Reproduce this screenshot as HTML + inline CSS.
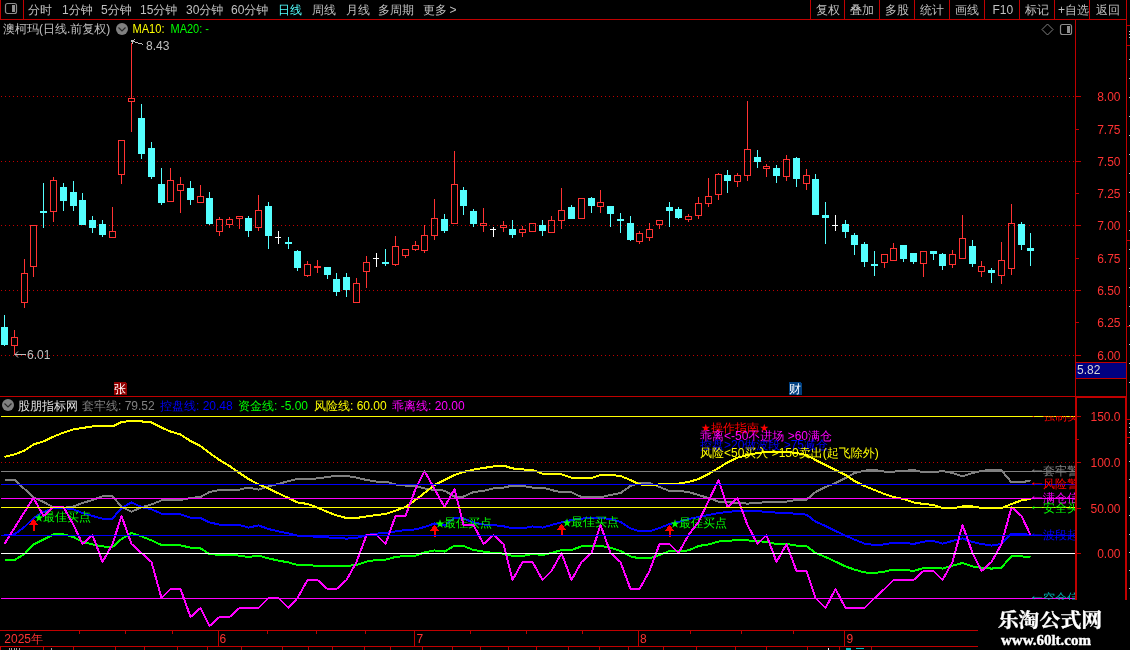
<!DOCTYPE html><html lang="zh"><head><meta charset="utf-8"><title>澳柯玛 日线</title>
<style>html,body{margin:0;padding:0;background:#000;overflow:hidden}svg{display:block;will-change:transform}text{font-family:"Liberation Sans","WenQuanYi Zen Hei","Noto Sans CJK SC",sans-serif;font-size:12px}.s{font-family:"Liberation Serif","Noto Serif CJK SC",serif;font-weight:bold}</style></head><body>
<svg width="1130" height="650" viewBox="0 0 1130 650">
<rect width="1130" height="650" fill="#000"/>
<g shape-rendering="crispEdges">
<defs><pattern id="dot" x="1" y="0" width="4" height="1" patternUnits="userSpaceOnUse"><rect x="0" y="0" width="1" height="1" fill="#c00000"/></pattern></defs>
<rect x="1" y="96" width="1074" height="1" fill="url(#dot)"/>
<rect x="1075" y="96" width="6" height="1" fill="#c00000"/>
<rect x="1" y="161" width="1074" height="1" fill="url(#dot)"/>
<rect x="1075" y="161" width="6" height="1" fill="#c00000"/>
<rect x="1" y="225" width="1074" height="1" fill="url(#dot)"/>
<rect x="1075" y="225" width="6" height="1" fill="#c00000"/>
<rect x="1" y="290" width="1074" height="1" fill="url(#dot)"/>
<rect x="1075" y="290" width="6" height="1" fill="#c00000"/>
<rect x="1" y="355" width="1074" height="1" fill="url(#dot)"/>
<rect x="1075" y="355" width="6" height="1" fill="#c00000"/>
<rect x="1075" y="129" width="4" height="1" fill="#c00000"/>
<rect x="1075" y="193" width="4" height="1" fill="#c00000"/>
<rect x="1075" y="258" width="4" height="1" fill="#c00000"/>
<rect x="1075" y="322" width="4" height="1" fill="#c00000"/>
<rect x="1" y="462" width="1074" height="1" fill="url(#dot)"/>
<rect x="1075" y="462" width="6" height="1" fill="#c00000"/>
<rect x="1075" y="416" width="6" height="1" fill="#c00000"/>
<rect x="1075" y="508" width="6" height="1" fill="#c00000"/>
<rect x="1075" y="553" width="6" height="1" fill="#c00000"/>
<rect x="1075" y="439" width="4" height="1" fill="#c00000"/>
<rect x="4" y="315" width="1" height="31" fill="#54ffff"/>
<rect x="1" y="327" width="7" height="18" fill="#54ffff"/>
<rect x="14" y="330" width="1" height="7" fill="#ff3232"/>
<rect x="14" y="346" width="1" height="9" fill="#ff3232"/>
<path d="M11 337h7v9h-7z M12 338h5v7h-5z" fill="#ff3232" fill-rule="evenodd"/>
<rect x="24" y="259" width="1" height="14" fill="#ff3232"/>
<rect x="24" y="303" width="1" height="5" fill="#ff3232"/>
<path d="M21 273h7v30h-7z M22 274h5v28h-5z" fill="#ff3232" fill-rule="evenodd"/>
<rect x="33" y="267" width="1" height="10" fill="#ff3232"/>
<path d="M30 225h7v42h-7z M31 226h5v40h-5z" fill="#ff3232" fill-rule="evenodd"/>
<rect x="43" y="183" width="1" height="45" fill="#54ffff"/>
<rect x="40" y="211" width="7" height="2" fill="#54ffff"/>
<rect x="53" y="177" width="1" height="3" fill="#ff3232"/>
<rect x="53" y="212" width="1" height="10" fill="#ff3232"/>
<path d="M50 180h7v32h-7z M51 181h5v30h-5z" fill="#ff3232" fill-rule="evenodd"/>
<rect x="63" y="183" width="1" height="28" fill="#54ffff"/>
<rect x="60" y="187" width="7" height="14" fill="#54ffff"/>
<rect x="73" y="181" width="1" height="30" fill="#54ffff"/>
<rect x="70" y="192" width="7" height="14" fill="#54ffff"/>
<rect x="82" y="193" width="1" height="32" fill="#54ffff"/>
<rect x="79" y="200" width="7" height="25" fill="#54ffff"/>
<rect x="92" y="216" width="1" height="17" fill="#54ffff"/>
<rect x="89" y="220" width="7" height="8" fill="#54ffff"/>
<rect x="102" y="220" width="1" height="17" fill="#54ffff"/>
<rect x="99" y="224" width="7" height="11" fill="#54ffff"/>
<rect x="112" y="207" width="1" height="24" fill="#ff3232"/>
<path d="M109 231h7v7h-7z M110 232h5v5h-5z" fill="#ff3232" fill-rule="evenodd"/>
<rect x="121" y="175" width="1" height="9" fill="#ff3232"/>
<path d="M118 140h7v35h-7z M119 141h5v33h-5z" fill="#ff3232" fill-rule="evenodd"/>
<rect x="131" y="43" width="1" height="55" fill="#ff3232"/>
<rect x="131" y="102" width="1" height="30" fill="#ff3232"/>
<path d="M128 98h7v4h-7z M129 99h5v2h-5z" fill="#ff3232" fill-rule="evenodd"/>
<rect x="141" y="104" width="1" height="55" fill="#54ffff"/>
<rect x="138" y="118" width="7" height="36" fill="#54ffff"/>
<rect x="151" y="142" width="1" height="37" fill="#54ffff"/>
<rect x="148" y="148" width="7" height="29" fill="#54ffff"/>
<rect x="161" y="168" width="1" height="37" fill="#54ffff"/>
<rect x="158" y="184" width="7" height="19" fill="#54ffff"/>
<rect x="170" y="168" width="1" height="12" fill="#ff3232"/>
<path d="M167 180h7v22h-7z M168 181h5v20h-5z" fill="#ff3232" fill-rule="evenodd"/>
<rect x="180" y="177" width="1" height="7" fill="#ff3232"/>
<rect x="180" y="191" width="1" height="22" fill="#ff3232"/>
<path d="M177 184h7v7h-7z M178 185h5v5h-5z" fill="#ff3232" fill-rule="evenodd"/>
<rect x="190" y="181" width="1" height="24" fill="#54ffff"/>
<rect x="187" y="188" width="7" height="12" fill="#54ffff"/>
<rect x="200" y="185" width="1" height="11" fill="#ff3232"/>
<path d="M197 196h7v7h-7z M198 197h5v5h-5z" fill="#ff3232" fill-rule="evenodd"/>
<rect x="209" y="192" width="1" height="33" fill="#54ffff"/>
<rect x="206" y="198" width="7" height="26" fill="#54ffff"/>
<rect x="219" y="217" width="1" height="2" fill="#ff3232"/>
<rect x="219" y="232" width="1" height="4" fill="#ff3232"/>
<path d="M216 219h7v13h-7z M217 220h5v11h-5z" fill="#ff3232" fill-rule="evenodd"/>
<rect x="229" y="217" width="1" height="2" fill="#ff3232"/>
<rect x="229" y="225" width="1" height="3" fill="#ff3232"/>
<path d="M226 219h7v6h-7z M227 220h5v4h-5z" fill="#ff3232" fill-rule="evenodd"/>
<rect x="239" y="219" width="1" height="10" fill="#ff3232"/>
<path d="M236 216h7v3h-7z M237 217h5v1h-5z" fill="#ff3232" fill-rule="evenodd"/>
<rect x="248" y="216" width="1" height="21" fill="#54ffff"/>
<rect x="245" y="218" width="7" height="13" fill="#54ffff"/>
<rect x="258" y="195" width="1" height="15" fill="#ff3232"/>
<rect x="258" y="228" width="1" height="3" fill="#ff3232"/>
<path d="M255 210h7v18h-7z M256 211h5v16h-5z" fill="#ff3232" fill-rule="evenodd"/>
<rect x="268" y="202" width="1" height="47" fill="#54ffff"/>
<rect x="265" y="206" width="7" height="30" fill="#54ffff"/>
<rect x="278" y="231" width="1" height="13" fill="#ffffff"/>
<rect x="275" y="237" width="6" height="1" fill="#ffffff"/>
<rect x="288" y="237" width="1" height="12" fill="#54ffff"/>
<rect x="285" y="242" width="7" height="2" fill="#54ffff"/>
<rect x="297" y="250" width="1" height="21" fill="#54ffff"/>
<rect x="294" y="251" width="7" height="17" fill="#54ffff"/>
<rect x="307" y="261" width="1" height="3" fill="#ff3232"/>
<rect x="307" y="276" width="1" height="1" fill="#ff3232"/>
<path d="M304 264h7v12h-7z M305 265h5v10h-5z" fill="#ff3232" fill-rule="evenodd"/>
<rect x="317" y="260" width="1" height="13" fill="#ff3232"/>
<rect x="314" y="266" width="7" height="2" fill="#ff3232"/>
<rect x="327" y="267" width="1" height="12" fill="#54ffff"/>
<rect x="324" y="267" width="7" height="8" fill="#54ffff"/>
<rect x="336" y="273" width="1" height="23" fill="#54ffff"/>
<rect x="333" y="279" width="7" height="13" fill="#54ffff"/>
<rect x="346" y="273" width="1" height="24" fill="#54ffff"/>
<rect x="343" y="277" width="7" height="13" fill="#54ffff"/>
<rect x="356" y="278" width="1" height="5" fill="#ff3232"/>
<path d="M353 283h7v20h-7z M354 284h5v18h-5z" fill="#ff3232" fill-rule="evenodd"/>
<rect x="366" y="256" width="1" height="6" fill="#ff3232"/>
<rect x="366" y="272" width="1" height="16" fill="#ff3232"/>
<path d="M363 262h7v10h-7z M364 263h5v8h-5z" fill="#ff3232" fill-rule="evenodd"/>
<rect x="376" y="253" width="1" height="14" fill="#ffffff"/>
<rect x="373" y="258" width="6" height="1" fill="#ffffff"/>
<rect x="385" y="249" width="1" height="17" fill="#54ffff"/>
<rect x="382" y="262" width="7" height="2" fill="#54ffff"/>
<rect x="395" y="236" width="1" height="10" fill="#ff3232"/>
<rect x="395" y="265" width="1" height="1" fill="#ff3232"/>
<path d="M392 246h7v19h-7z M393 247h5v17h-5z" fill="#ff3232" fill-rule="evenodd"/>
<rect x="405" y="256" width="1" height="2" fill="#ff3232"/>
<path d="M402 249h7v7h-7z M403 250h5v5h-5z" fill="#ff3232" fill-rule="evenodd"/>
<rect x="415" y="241" width="1" height="4" fill="#ff3232"/>
<rect x="415" y="250" width="1" height="1" fill="#ff3232"/>
<path d="M412 245h7v5h-7z M413 246h5v3h-5z" fill="#ff3232" fill-rule="evenodd"/>
<rect x="424" y="225" width="1" height="10" fill="#ff3232"/>
<rect x="424" y="251" width="1" height="2" fill="#ff3232"/>
<path d="M421 235h7v16h-7z M422 236h5v14h-5z" fill="#ff3232" fill-rule="evenodd"/>
<rect x="434" y="199" width="1" height="19" fill="#ff3232"/>
<rect x="434" y="236" width="1" height="4" fill="#ff3232"/>
<path d="M431 218h7v18h-7z M432 219h5v16h-5z" fill="#ff3232" fill-rule="evenodd"/>
<rect x="444" y="214" width="1" height="19" fill="#54ffff"/>
<rect x="441" y="219" width="7" height="12" fill="#54ffff"/>
<rect x="454" y="151" width="1" height="33" fill="#ff3232"/>
<path d="M451 184h7v40h-7z M452 185h5v38h-5z" fill="#ff3232" fill-rule="evenodd"/>
<rect x="463" y="187" width="1" height="28" fill="#54ffff"/>
<rect x="460" y="190" width="7" height="16" fill="#54ffff"/>
<rect x="473" y="209" width="1" height="18" fill="#54ffff"/>
<rect x="470" y="211" width="7" height="13" fill="#54ffff"/>
<rect x="483" y="208" width="1" height="15" fill="#ff3232"/>
<rect x="483" y="226" width="1" height="6" fill="#ff3232"/>
<path d="M480 223h7v3h-7z M481 224h5v1h-5z" fill="#ff3232" fill-rule="evenodd"/>
<rect x="493" y="227" width="1" height="10" fill="#ffffff"/>
<rect x="490" y="229" width="6" height="1" fill="#ffffff"/>
<rect x="503" y="221" width="1" height="4" fill="#ff3232"/>
<rect x="503" y="228" width="1" height="4" fill="#ff3232"/>
<path d="M500 225h7v3h-7z M501 226h5v1h-5z" fill="#ff3232" fill-rule="evenodd"/>
<rect x="512" y="220" width="1" height="18" fill="#54ffff"/>
<rect x="509" y="229" width="7" height="6" fill="#54ffff"/>
<rect x="522" y="226" width="1" height="3" fill="#ff3232"/>
<rect x="522" y="233" width="1" height="4" fill="#ff3232"/>
<path d="M519 229h7v4h-7z M520 230h5v2h-5z" fill="#ff3232" fill-rule="evenodd"/>
<path d="M529 223h7v9h-7z M530 224h5v7h-5z" fill="#ff3232" fill-rule="evenodd"/>
<rect x="542" y="220" width="1" height="16" fill="#54ffff"/>
<rect x="539" y="225" width="7" height="6" fill="#54ffff"/>
<rect x="551" y="216" width="1" height="4" fill="#ff3232"/>
<path d="M548 220h7v13h-7z M549 221h5v11h-5z" fill="#ff3232" fill-rule="evenodd"/>
<rect x="561" y="188" width="1" height="22" fill="#ff3232"/>
<rect x="561" y="221" width="1" height="8" fill="#ff3232"/>
<path d="M558 210h7v11h-7z M559 211h5v9h-5z" fill="#ff3232" fill-rule="evenodd"/>
<rect x="571" y="205" width="1" height="14" fill="#54ffff"/>
<rect x="568" y="207" width="7" height="12" fill="#54ffff"/>
<path d="M578 198h7v21h-7z M579 199h5v19h-5z" fill="#ff3232" fill-rule="evenodd"/>
<rect x="591" y="197" width="1" height="16" fill="#54ffff"/>
<rect x="588" y="198" width="7" height="8" fill="#54ffff"/>
<rect x="600" y="190" width="1" height="12" fill="#ff3232"/>
<rect x="600" y="207" width="1" height="6" fill="#ff3232"/>
<path d="M597 202h7v5h-7z M598 203h5v3h-5z" fill="#ff3232" fill-rule="evenodd"/>
<rect x="610" y="206" width="1" height="21" fill="#54ffff"/>
<rect x="607" y="206" width="7" height="8" fill="#54ffff"/>
<rect x="620" y="213" width="1" height="20" fill="#54ffff"/>
<rect x="617" y="219" width="7" height="2" fill="#54ffff"/>
<rect x="630" y="216" width="1" height="25" fill="#54ffff"/>
<rect x="627" y="223" width="7" height="17" fill="#54ffff"/>
<rect x="639" y="231" width="1" height="2" fill="#ff3232"/>
<rect x="639" y="242" width="1" height="2" fill="#ff3232"/>
<path d="M636 233h7v9h-7z M637 234h5v7h-5z" fill="#ff3232" fill-rule="evenodd"/>
<rect x="649" y="223" width="1" height="6" fill="#ff3232"/>
<rect x="649" y="238" width="1" height="3" fill="#ff3232"/>
<path d="M646 229h7v9h-7z M647 230h5v7h-5z" fill="#ff3232" fill-rule="evenodd"/>
<rect x="659" y="225" width="1" height="4" fill="#ff3232"/>
<path d="M656 220h7v5h-7z M657 221h5v3h-5z" fill="#ff3232" fill-rule="evenodd"/>
<rect x="669" y="202" width="1" height="25" fill="#54ffff"/>
<rect x="666" y="207" width="7" height="4" fill="#54ffff"/>
<rect x="678" y="207" width="1" height="12" fill="#54ffff"/>
<rect x="675" y="209" width="7" height="9" fill="#54ffff"/>
<rect x="688" y="214" width="1" height="2" fill="#ff3232"/>
<rect x="688" y="220" width="1" height="2" fill="#ff3232"/>
<path d="M685 216h7v4h-7z M686 217h5v2h-5z" fill="#ff3232" fill-rule="evenodd"/>
<rect x="698" y="197" width="1" height="6" fill="#ff3232"/>
<rect x="698" y="216" width="1" height="3" fill="#ff3232"/>
<path d="M695 203h7v13h-7z M696 204h5v11h-5z" fill="#ff3232" fill-rule="evenodd"/>
<rect x="708" y="178" width="1" height="18" fill="#ff3232"/>
<rect x="708" y="204" width="1" height="3" fill="#ff3232"/>
<path d="M705 196h7v8h-7z M706 197h5v6h-5z" fill="#ff3232" fill-rule="evenodd"/>
<rect x="718" y="173" width="1" height="1" fill="#ff3232"/>
<rect x="718" y="195" width="1" height="5" fill="#ff3232"/>
<path d="M715 174h7v21h-7z M716 175h5v19h-5z" fill="#ff3232" fill-rule="evenodd"/>
<rect x="727" y="170" width="1" height="23" fill="#54ffff"/>
<rect x="724" y="175" width="7" height="6" fill="#54ffff"/>
<rect x="737" y="173" width="1" height="2" fill="#ff3232"/>
<rect x="737" y="182" width="1" height="5" fill="#ff3232"/>
<path d="M734 175h7v7h-7z M735 176h5v5h-5z" fill="#ff3232" fill-rule="evenodd"/>
<rect x="747" y="101" width="1" height="48" fill="#ff3232"/>
<rect x="747" y="176" width="1" height="5" fill="#ff3232"/>
<path d="M744 149h7v27h-7z M745 150h5v25h-5z" fill="#ff3232" fill-rule="evenodd"/>
<rect x="757" y="150" width="1" height="18" fill="#54ffff"/>
<rect x="754" y="157" width="7" height="5" fill="#54ffff"/>
<rect x="766" y="164" width="1" height="2" fill="#ff3232"/>
<rect x="766" y="169" width="1" height="8" fill="#ff3232"/>
<path d="M763 166h7v3h-7z M764 167h5v1h-5z" fill="#ff3232" fill-rule="evenodd"/>
<rect x="776" y="165" width="1" height="18" fill="#54ffff"/>
<rect x="773" y="168" width="7" height="8" fill="#54ffff"/>
<rect x="786" y="155" width="1" height="4" fill="#ff3232"/>
<rect x="786" y="177" width="1" height="4" fill="#ff3232"/>
<path d="M783 159h7v18h-7z M784 160h5v16h-5z" fill="#ff3232" fill-rule="evenodd"/>
<rect x="796" y="157" width="1" height="30" fill="#54ffff"/>
<rect x="793" y="158" width="7" height="21" fill="#54ffff"/>
<rect x="806" y="169" width="1" height="6" fill="#ff3232"/>
<rect x="806" y="184" width="1" height="6" fill="#ff3232"/>
<path d="M803 175h7v9h-7z M804 176h5v7h-5z" fill="#ff3232" fill-rule="evenodd"/>
<rect x="815" y="174" width="1" height="41" fill="#54ffff"/>
<rect x="812" y="179" width="7" height="36" fill="#54ffff"/>
<rect x="825" y="202" width="1" height="42" fill="#54ffff"/>
<rect x="822" y="215" width="7" height="3" fill="#54ffff"/>
<rect x="835" y="215" width="1" height="16" fill="#ffffff"/>
<rect x="832" y="225" width="6" height="1" fill="#ffffff"/>
<rect x="845" y="220" width="1" height="18" fill="#54ffff"/>
<rect x="842" y="224" width="7" height="8" fill="#54ffff"/>
<rect x="854" y="233" width="1" height="22" fill="#54ffff"/>
<rect x="851" y="235" width="7" height="10" fill="#54ffff"/>
<rect x="864" y="242" width="1" height="25" fill="#54ffff"/>
<rect x="861" y="244" width="7" height="18" fill="#54ffff"/>
<rect x="874" y="251" width="1" height="25" fill="#54ffff"/>
<rect x="871" y="264" width="7" height="2" fill="#54ffff"/>
<rect x="884" y="263" width="1" height="5" fill="#ff3232"/>
<path d="M881 254h7v9h-7z M882 255h5v7h-5z" fill="#ff3232" fill-rule="evenodd"/>
<rect x="893" y="243" width="1" height="5" fill="#ff3232"/>
<path d="M890 248h7v13h-7z M891 249h5v11h-5z" fill="#ff3232" fill-rule="evenodd"/>
<rect x="903" y="245" width="1" height="17" fill="#54ffff"/>
<rect x="900" y="245" width="7" height="14" fill="#54ffff"/>
<rect x="913" y="253" width="1" height="11" fill="#54ffff"/>
<rect x="910" y="253" width="7" height="9" fill="#54ffff"/>
<rect x="923" y="264" width="1" height="13" fill="#ff3232"/>
<path d="M920 251h7v13h-7z M921 252h5v11h-5z" fill="#ff3232" fill-rule="evenodd"/>
<rect x="933" y="251" width="1" height="9" fill="#54ffff"/>
<rect x="930" y="251" width="7" height="3" fill="#54ffff"/>
<rect x="942" y="253" width="1" height="17" fill="#54ffff"/>
<rect x="939" y="254" width="7" height="12" fill="#54ffff"/>
<rect x="952" y="250" width="1" height="4" fill="#ff3232"/>
<rect x="952" y="265" width="1" height="3" fill="#ff3232"/>
<path d="M949 254h7v11h-7z M950 255h5v9h-5z" fill="#ff3232" fill-rule="evenodd"/>
<rect x="962" y="215" width="1" height="23" fill="#ff3232"/>
<path d="M959 238h7v21h-7z M960 239h5v19h-5z" fill="#ff3232" fill-rule="evenodd"/>
<rect x="972" y="240" width="1" height="27" fill="#54ffff"/>
<rect x="969" y="246" width="7" height="18" fill="#54ffff"/>
<rect x="981" y="261" width="1" height="5" fill="#ff3232"/>
<rect x="981" y="272" width="1" height="5" fill="#ff3232"/>
<path d="M978 266h7v6h-7z M979 267h5v4h-5z" fill="#ff3232" fill-rule="evenodd"/>
<rect x="991" y="268" width="1" height="15" fill="#54ffff"/>
<rect x="988" y="270" width="7" height="3" fill="#54ffff"/>
<rect x="1001" y="242" width="1" height="18" fill="#ff3232"/>
<rect x="1001" y="276" width="1" height="8" fill="#ff3232"/>
<path d="M998 260h7v16h-7z M999 261h5v14h-5z" fill="#ff3232" fill-rule="evenodd"/>
<rect x="1011" y="204" width="1" height="19" fill="#ff3232"/>
<rect x="1011" y="269" width="1" height="6" fill="#ff3232"/>
<path d="M1008 223h7v46h-7z M1009 224h5v44h-5z" fill="#ff3232" fill-rule="evenodd"/>
<rect x="1021" y="222" width="1" height="28" fill="#54ffff"/>
<rect x="1018" y="224" width="7" height="21" fill="#54ffff"/>
<rect x="1030" y="233" width="1" height="33" fill="#54ffff"/>
<rect x="1027" y="248" width="7" height="3" fill="#54ffff"/>
</g>
<defs><clipPath id="cp"><rect x="0" y="416" width="1075" height="214"/></clipPath></defs>
<g clip-path="url(#cp)">
<polyline points="4.5,479.8 14.5,479.8 24.5,489 33.5,497.4 43.5,502 53.5,507.4 63.5,508 73.5,506.4 82.5,503 92.5,500 102.5,496.4 112.5,496 121.5,507 131.5,511.6 141.5,507.4 151.5,504.4 161.5,500.4 170.5,500 180.5,500 190.5,498 200.5,497 209.5,492 219.5,490 229.5,489.6 239.5,489.6 248.5,487.6 258.5,489.6 268.5,486.4 278.5,484 288.5,481 297.5,479 307.5,479 317.5,478.4 327.5,477 336.5,475.6 346.5,476 356.5,477.6 366.5,480 376.5,481.6 385.5,481.6 395.5,484.4 405.5,485.6 415.5,486 424.5,488.4 434.5,490 444.5,490.6 454.5,496.6 463.5,496.6 473.5,492 483.5,491 493.5,488.4 503.5,487.6 512.5,485.6 522.5,486 532.5,487.6 542.5,487.6 551.5,490 561.5,492.4 571.5,492.4 581.5,497 591.5,497.4 600.5,497.4 610.5,495 620.5,493 630.5,486 639.5,483 649.5,483 659.5,487 669.5,491 678.5,491 688.5,492 698.5,495 708.5,498 718.5,501.6 727.5,502 737.5,503 747.5,503.6 757.5,503 766.5,502 776.5,501.6 786.5,501.6 796.5,500 806.5,499.6 815.5,492 825.5,487 835.5,483 845.5,478 854.5,473 864.5,470.6 874.5,470 884.5,471.6 893.5,471.6 903.5,471 913.5,470 923.5,472.4 933.5,472.4 942.5,471 952.5,473 962.5,476.4 972.5,473 981.5,471 991.5,469.6 1001.5,470.4 1011.5,482.4 1021.5,482.4 1030.5,480.4" fill="none" stroke="#808080" stroke-width="2" stroke-linejoin="round" shape-rendering="crispEdges"/>
<polyline points="4.5,535 14.5,534.4 24.5,527 33.5,518 43.5,512 53.5,508 63.5,508 73.5,509.4 82.5,513 92.5,516 102.5,518.6 112.5,518.6 121.5,508 131.5,502.4 141.5,507 151.5,509.4 161.5,513.6 170.5,514 180.5,514.4 190.5,517.6 200.5,518 209.5,522.4 219.5,524.6 229.5,525 239.5,525 248.5,527.6 258.5,525.4 268.5,529 278.5,531.4 288.5,533.4 297.5,535.6 307.5,536 317.5,537 327.5,537.4 336.5,538 346.5,538.6 356.5,538 366.5,535 376.5,533.6 385.5,533 395.5,531.4 405.5,530 415.5,529.4 424.5,527 434.5,523.5 444.5,525.6 454.5,517.7 463.5,518.5 473.5,522.5 483.5,524.5 493.5,525 503.5,526.3 512.5,528.4 522.5,528.4 532.5,526.4 542.5,527.6 551.5,525 561.5,522.4 571.5,520 581.5,518.6 591.5,518 600.5,518 610.5,519 620.5,522 630.5,528.4 639.5,531.4 649.5,531.4 659.5,528 669.5,524 678.5,522 688.5,519 698.5,517 708.5,515 718.5,513 727.5,512 737.5,511 747.5,510.6 757.5,511 766.5,512 776.5,512.6 786.5,512.6 796.5,514 806.5,514.6 815.5,521.6 825.5,526 835.5,531 845.5,535.6 854.5,539.6 864.5,543.6 874.5,545 884.5,544.4 893.5,542.6 903.5,542.6 913.5,544 923.5,541.6 933.5,541 942.5,543.6 952.5,541 962.5,538.4 972.5,542 981.5,544 991.5,545.6 1001.5,544 1011.5,533.6 1021.5,533.6 1030.5,535" fill="none" stroke="#0000ff" stroke-width="2" stroke-linejoin="round" shape-rendering="crispEdges"/>
<polyline points="4.5,560 14.5,560 24.5,554 33.5,544.4 43.5,539.6 53.5,534.4 63.5,534.4 73.5,537 82.5,542 92.5,544.4 102.5,546.4 112.5,547 121.5,539 131.5,533 141.5,536.4 151.5,540.4 161.5,545 170.5,545 180.5,545.4 190.5,547.6 200.5,548.4 209.5,554 219.5,555 229.5,555 239.5,555.6 248.5,557 258.5,555.6 268.5,558.4 278.5,560.6 288.5,562.4 297.5,565 307.5,565 317.5,566 327.5,566 336.5,566 346.5,566 356.5,565 366.5,561.6 376.5,560 385.5,559.6 395.5,557 405.5,556 415.5,555.6 424.5,552.4 434.5,550.4 444.5,551.6 454.5,545.6 463.5,546 473.5,550 483.5,551.6 493.5,553 503.5,553.6 512.5,556 522.5,556 532.5,554 542.5,555 551.5,553 561.5,550 571.5,550 581.5,546.4 591.5,546 600.5,546 610.5,547.6 620.5,551 630.5,556.4 639.5,558.4 649.5,558.4 659.5,555 669.5,551 678.5,551 688.5,550.4 698.5,546 708.5,544.4 718.5,541.6 727.5,540.6 737.5,540.4 747.5,540.4 757.5,541 766.5,542 776.5,544 786.5,544 796.5,545.6 806.5,546 815.5,553 825.5,557 835.5,561.6 845.5,566.4 854.5,569.6 864.5,572.4 874.5,573 884.5,571.6 893.5,569.6 903.5,569.6 913.5,571 923.5,568 933.5,567.6 942.5,568.6 952.5,565.6 962.5,563 972.5,566.4 981.5,567.6 991.5,568.6 1001.5,567.6 1011.5,556 1021.5,556.4 1030.5,557" fill="none" stroke="#00ff00" stroke-width="2" stroke-linejoin="round" shape-rendering="crispEdges"/>
<polyline points="4.5,457 14.5,454.4 24.5,450.6 33.5,444.4 43.5,441.4 53.5,436.6 63.5,432.6 73.5,429.4 82.5,428 92.5,426.4 102.5,426.4 112.5,426.4 121.5,422 131.5,421 141.5,421.4 151.5,422.4 161.5,427.6 170.5,431.6 180.5,434.4 190.5,441 200.5,446 209.5,453 219.5,460 229.5,466 239.5,473 248.5,479 258.5,484.4 268.5,488.4 278.5,493.4 288.5,498 297.5,502.4 307.5,504 317.5,507.6 327.5,512 336.5,515.4 346.5,518 356.5,518 366.5,516.4 376.5,515 385.5,514 395.5,510.6 405.5,507 415.5,500 424.5,493 434.5,485 444.5,480 454.5,475 463.5,472 473.5,469.6 483.5,468 493.5,466.4 503.5,465.6 512.5,468.4 522.5,469.4 532.5,470 542.5,473.6 551.5,474.4 561.5,474.4 571.5,477.6 581.5,478 591.5,478 600.5,475 610.5,475 620.5,476 630.5,480 639.5,484.4 649.5,485 659.5,484.4 669.5,483.6 678.5,483.6 688.5,482 698.5,479 708.5,474 718.5,468 727.5,462.4 737.5,457.6 747.5,455 757.5,453 766.5,452 776.5,451.6 786.5,452 796.5,453 806.5,455 815.5,460 825.5,465 835.5,470 845.5,475 854.5,481 864.5,486 874.5,490 884.5,494 893.5,497 903.5,499 913.5,502.4 923.5,504 933.5,505 942.5,508 952.5,508.4 962.5,506.4 972.5,506.4 981.5,508 991.5,508.4 1001.5,508 1011.5,504 1021.5,500.4 1030.5,499" fill="none" stroke="#ffff00" stroke-width="2" stroke-linejoin="round" shape-rendering="crispEdges"/>
<text x="34" y="520.5" fill="#00ff00" style="font-size:10px">★</text>
<text x="43" y="521" fill="#00ff00">最佳买点</text>
<path d="M33.5 519l5 6h-4v6h-2v-6h-4z" fill="#ff0000" shape-rendering="crispEdges"/>
<text x="435" y="526.5" fill="#00ff00" style="font-size:10px">★</text>
<text x="444" y="527" fill="#00ff00">最佳买点</text>
<path d="M434.5 525l5 6h-4v6h-2v-6h-4z" fill="#ff0000" shape-rendering="crispEdges"/>
<text x="562" y="525.5" fill="#00ff00" style="font-size:10px">★</text>
<text x="571" y="526" fill="#00ff00">最佳买点</text>
<path d="M561.5 524l5 6h-4v6h-2v-6h-4z" fill="#ff0000" shape-rendering="crispEdges"/>
<text x="670" y="526.5" fill="#00ff00" style="font-size:10px">★</text>
<text x="679" y="527" fill="#00ff00">最佳买点</text>
<path d="M669.5 525l5 6h-4v6h-2v-6h-4z" fill="#ff0000" shape-rendering="crispEdges"/>
<polyline points="4.5,544 14.5,528 24.5,512 33.5,498 43.5,516 53.5,507 63.5,507 73.5,525 82.5,544 92.5,535 102.5,562 112.5,544 121.5,516 131.5,544 141.5,553 151.5,562 161.5,598 170.5,589 180.5,589 190.5,617 200.5,608 209.5,626 219.5,617 229.5,617 239.5,608 248.5,608 258.5,608 268.5,598 278.5,598 288.5,608 297.5,598 307.5,580 317.5,580 327.5,589 336.5,589 346.5,580 356.5,562 366.5,535 376.5,535 385.5,544 395.5,516 405.5,516 415.5,489 424.5,471 434.5,489 444.5,507 454.5,489 463.5,525 473.5,525 483.5,544 493.5,535 503.5,544 512.5,580 522.5,562 532.5,562 542.5,580 551.5,571 561.5,553 571.5,580 581.5,562 591.5,553 600.5,525 610.5,553 620.5,562 630.5,589 639.5,589 649.5,571 659.5,544 669.5,544 678.5,553 688.5,535 698.5,522 708.5,501 718.5,480 727.5,507 737.5,498 747.5,525 757.5,544 766.5,535 776.5,562 786.5,544 796.5,571 806.5,571 815.5,598 825.5,608 835.5,589 845.5,608 854.5,608 864.5,608 874.5,598 884.5,589 893.5,580 903.5,580 913.5,580 923.5,571 933.5,571 942.5,580 952.5,562 962.5,525 972.5,553 981.5,571 991.5,562 1001.5,544 1011.5,507 1021.5,516 1030.5,535" fill="none" stroke="#ff00ff" stroke-width="2" stroke-linejoin="round" shape-rendering="crispEdges"/>
<g shape-rendering="crispEdges">
<rect x="1" y="416" width="1074" height="1" fill="#ffff00"/>
<rect x="1" y="471" width="1074" height="1" fill="#808080"/>
<rect x="1" y="484" width="1074" height="1" fill="#0000ff"/>
<rect x="1" y="498" width="1074" height="1" fill="#ff00ff"/>
<rect x="1" y="507" width="1074" height="1" fill="#ffff00"/>
<rect x="1" y="535" width="1074" height="1" fill="#0000ff"/>
<rect x="1" y="553" width="1074" height="1" fill="#ffffff"/>
<rect x="1" y="598" width="1074" height="1" fill="#ff00ff"/>
</g>
<text x="701" y="432" fill="#ff0000"><tspan style="font-size:9.5px" dy="-1">★</tspan><tspan x="711" dy="1">操作指南</tspan><tspan x="759.5" dy="-1" style="font-size:9.5px">★</tspan></text>
<text x="700" y="440" fill="#ff00ff">乖离&lt;-50不进场 &gt;60满仓</text>
<text x="700" y="449" fill="#0000ff">控盘&gt;20做波段 &gt;75减仓</text>
<text x="700" y="457" fill="#ffff00">风险&lt;50买入 &gt;150卖出(起飞除外)</text>
<text x="1031" y="420" fill="#ff0000"><tspan style="font-family:'WenQuanYi Zen Hei','Noto Sans CJK SC',sans-serif">←</tspan>强制卖</text>
<text x="1031" y="475" fill="#808080"><tspan style="font-family:'WenQuanYi Zen Hei','Noto Sans CJK SC',sans-serif">←</tspan>套牢警</text>
<text x="1031" y="488" fill="#ff0000"><tspan style="font-family:'WenQuanYi Zen Hei','Noto Sans CJK SC',sans-serif">←</tspan>风险警</text>
<text x="1031" y="502" fill="#ff00ff"><tspan style="font-family:'WenQuanYi Zen Hei','Noto Sans CJK SC',sans-serif">←</tspan>满仓信</text>
<text x="1031" y="512" fill="#00ff00"><tspan style="font-family:'WenQuanYi Zen Hei','Noto Sans CJK SC',sans-serif">←</tspan>安全买</text>
<text x="1031" y="539" fill="#0000ff"><tspan style="font-family:'WenQuanYi Zen Hei','Noto Sans CJK SC',sans-serif">←</tspan>波段起</text>
<text x="1031" y="602" fill="#00b0b0"><tspan style="font-family:'WenQuanYi Zen Hei','Noto Sans CJK SC',sans-serif">←</tspan>空仓信</text>
</g>
<g shape-rendering="crispEdges">
<rect x="0" y="19" width="1127" height="1" fill="#c00000"/>
<rect x="0" y="0" width="1" height="20" fill="#c00000"/>
<rect x="23" y="0" width="1" height="20" fill="#c00000"/>
<rect x="810" y="0" width="1" height="20" fill="#c00000"/>
<rect x="844" y="0" width="1" height="20" fill="#c00000"/>
<rect x="879" y="0" width="1" height="20" fill="#c00000"/>
<rect x="914" y="0" width="1" height="20" fill="#c00000"/>
<rect x="949" y="0" width="1" height="20" fill="#c00000"/>
<rect x="984" y="0" width="1" height="20" fill="#c00000"/>
<rect x="1019" y="0" width="1" height="20" fill="#c00000"/>
<rect x="1054" y="0" width="1" height="20" fill="#c00000"/>
<rect x="1089" y="0" width="1" height="20" fill="#c00000"/>
<rect x="1075" y="19" width="1" height="378" fill="#c00000"/>
<rect x="1075" y="397" width="2" height="233" fill="#c00000"/>
<rect x="0" y="396" width="1127" height="1" fill="#c00000"/>
<rect x="1076" y="396" width="51" height="2" fill="#c00000"/>
<rect x="0" y="630" width="1076" height="1" fill="#c00000"/>
<rect x="0" y="646" width="1076" height="1" fill="#c00000"/>
<rect x="1126" y="0" width="1" height="650" fill="#c00000"/>
<rect x="1125" y="396" width="1" height="254" fill="#c00000"/>
<rect x="1127" y="25" width="3" height="1" fill="#c00000"/>
<rect x="1127" y="45" width="3" height="1" fill="#c00000"/>
<rect x="1127" y="240" width="3" height="1" fill="#c00000"/>
<rect x="1127" y="326" width="3" height="1" fill="#c00000"/>
<rect x="1127" y="419" width="3" height="1" fill="#c00000"/>
<rect x="1127" y="437" width="3" height="1" fill="#c00000"/>
<rect x="1129" y="59" width="1" height="1" fill="#c0c0c0"/>
<rect x="1129" y="78" width="1" height="1" fill="#c0c0c0"/>
<rect x="1129" y="97" width="1" height="1" fill="#c0c0c0"/>
<rect x="1129" y="116" width="1" height="1" fill="#c0c0c0"/>
<rect x="1129" y="135" width="1" height="1" fill="#c0c0c0"/>
<rect x="1129" y="154" width="1" height="1" fill="#c0c0c0"/>
<rect x="1129" y="173" width="1" height="1" fill="#c0c0c0"/>
<rect x="1129" y="192" width="1" height="1" fill="#c0c0c0"/>
<rect x="1129" y="211" width="1" height="1" fill="#c0c0c0"/>
<rect x="1129" y="230" width="1" height="1" fill="#c0c0c0"/>
<rect x="1129" y="249" width="1" height="1" fill="#c0c0c0"/>
<rect x="1129" y="268" width="1" height="1" fill="#c0c0c0"/>
<rect x="1129" y="287" width="1" height="1" fill="#c0c0c0"/>
<rect x="1129" y="306" width="1" height="1" fill="#c0c0c0"/>
<rect x="1129" y="325" width="1" height="1" fill="#c0c0c0"/>
<rect x="1129" y="344" width="1" height="1" fill="#c0c0c0"/>
<rect x="1129" y="363" width="1" height="1" fill="#c0c0c0"/>
<rect x="1129" y="382" width="1" height="1" fill="#c0c0c0"/>
<rect x="1129" y="443" width="1" height="1" fill="#c0c0c0"/>
<rect x="1129" y="461" width="1" height="1" fill="#c0c0c0"/>
<rect x="1129" y="479" width="1" height="1" fill="#c0c0c0"/>
<rect x="1129" y="497" width="1" height="1" fill="#c0c0c0"/>
<rect x="1129" y="515" width="1" height="1" fill="#c0c0c0"/>
<rect x="1129" y="534" width="1" height="1" fill="#c0c0c0"/>
<rect x="1129" y="552" width="1" height="1" fill="#c0c0c0"/>
<rect x="1129" y="570" width="1" height="1" fill="#c0c0c0"/>
<rect x="1129" y="588" width="1" height="1" fill="#c0c0c0"/>
<rect x="1129" y="31" width="1" height="1" fill="#c0c0c0"/>
<rect x="1129" y="34" width="1" height="1" fill="#c0c0c0"/>
<rect x="1129" y="37" width="1" height="1" fill="#c0c0c0"/>
<rect x="1129" y="423" width="1" height="1" fill="#c0c0c0"/>
<rect x="1129" y="427" width="1" height="1" fill="#c0c0c0"/>
<rect x="1129" y="432" width="1" height="1" fill="#c0c0c0"/>
<rect x="79" y="631" width="1" height="3" fill="#c00000"/>
<rect x="125" y="631" width="1" height="3" fill="#c00000"/>
<rect x="172" y="631" width="1" height="3" fill="#c00000"/>
<rect x="267" y="631" width="1" height="3" fill="#c00000"/>
<rect x="316" y="631" width="1" height="3" fill="#c00000"/>
<rect x="365" y="631" width="1" height="3" fill="#c00000"/>
<rect x="470" y="631" width="1" height="3" fill="#c00000"/>
<rect x="526" y="631" width="1" height="3" fill="#c00000"/>
<rect x="582" y="631" width="1" height="3" fill="#c00000"/>
<rect x="690" y="631" width="1" height="3" fill="#c00000"/>
<rect x="741" y="631" width="1" height="3" fill="#c00000"/>
<rect x="793" y="631" width="1" height="3" fill="#c00000"/>
<rect x="218" y="631" width="1" height="15" fill="#c00000"/>
<rect x="414" y="631" width="1" height="15" fill="#c00000"/>
<rect x="638" y="631" width="1" height="15" fill="#c00000"/>
<rect x="844" y="631" width="1" height="15" fill="#c00000"/>
<rect x="0" y="647" width="1" height="3" fill="#c00000"/>
<rect x="43" y="647" width="1" height="3" fill="#c00000"/>
<rect x="73" y="647" width="1" height="3" fill="#c00000"/>
<rect x="115" y="647" width="1" height="3" fill="#c00000"/>
<rect x="144" y="647" width="1" height="3" fill="#c00000"/>
<rect x="177" y="647" width="1" height="3" fill="#c00000"/>
<rect x="207" y="647" width="1" height="3" fill="#c00000"/>
<rect x="241" y="647" width="1" height="3" fill="#c00000"/>
<rect x="282" y="647" width="1" height="3" fill="#c00000"/>
<rect x="308" y="647" width="1" height="3" fill="#c00000"/>
<rect x="332" y="647" width="1" height="3" fill="#c00000"/>
<rect x="364" y="647" width="1" height="3" fill="#c00000"/>
<rect x="390" y="647" width="1" height="3" fill="#c00000"/>
<rect x="422" y="647" width="1" height="3" fill="#c00000"/>
<rect x="452" y="647" width="1" height="3" fill="#c00000"/>
<rect x="480" y="647" width="1" height="3" fill="#c00000"/>
<rect x="508" y="647" width="1" height="3" fill="#c00000"/>
<rect x="536" y="647" width="1" height="3" fill="#c00000"/>
<rect x="568" y="647" width="1" height="3" fill="#c00000"/>
<rect x="599" y="647" width="1" height="3" fill="#c00000"/>
<rect x="628" y="647" width="1" height="3" fill="#c00000"/>
<rect x="663" y="647" width="1" height="3" fill="#c00000"/>
<rect x="696" y="647" width="1" height="3" fill="#c00000"/>
<rect x="735" y="647" width="1" height="3" fill="#c00000"/>
<rect x="766" y="647" width="1" height="3" fill="#c00000"/>
<rect x="807" y="647" width="1" height="3" fill="#c00000"/>
<rect x="839" y="647" width="1" height="3" fill="#c00000"/>
<rect x="871" y="647" width="1" height="3" fill="#c00000"/>
<rect x="9" y="648" width="1" height="2" fill="#a0a0a0"/>
<rect x="11" y="648" width="1" height="2" fill="#a0a0a0"/>
<rect x="14" y="648" width="1" height="2" fill="#a0a0a0"/>
<rect x="16" y="648" width="1" height="2" fill="#a0a0a0"/>
<rect x="19" y="648" width="1" height="2" fill="#a0a0a0"/>
<rect x="51" y="648" width="1" height="2" fill="#a0a0a0"/>
<rect x="828" y="648" width="1" height="2" fill="#ffffff"/>
<rect x="846" y="648" width="5" height="2" fill="#00c0c0"/>
<rect x="856" y="648" width="8" height="1" fill="#00c0c0"/>
<rect x="1076" y="362" width="51" height="17" fill="#c00000"/>
<rect x="1076" y="363" width="50" height="15" fill="#000080"/>
<path d="M114 382h11l2 2v11h-13z" fill="#900000"/>
<path d="M789 382h11l2 2v11h-13z" fill="#004080"/>
</g>
<rect x="978" y="600" width="152" height="50" fill="#000"/>
<text x="28" y="14" fill="#c0c0c0">分时</text>
<text x="62" y="14" fill="#c0c0c0">1分钟</text>
<text x="101" y="14" fill="#c0c0c0">5分钟</text>
<text x="140" y="14" fill="#c0c0c0">15分钟</text>
<text x="186" y="14" fill="#c0c0c0">30分钟</text>
<text x="231" y="14" fill="#c0c0c0">60分钟</text>
<text x="278" y="14" fill="#54ffff">日线</text>
<text x="312" y="14" fill="#c0c0c0">周线</text>
<text x="346" y="14" fill="#c0c0c0">月线</text>
<text x="378" y="14" fill="#c0c0c0">多周期</text>
<text x="423" y="14" fill="#c0c0c0">更多</text>
<text x="816" y="14" fill="#c0c0c0">复权</text>
<text x="850" y="14" fill="#c0c0c0">叠加</text>
<text x="885" y="14" fill="#c0c0c0">多股</text>
<text x="920" y="14" fill="#c0c0c0">统计</text>
<text x="955" y="14" fill="#c0c0c0">画线</text>
<text x="992.5" y="14" fill="#c0c0c0">F10</text>
<text x="1025" y="14" fill="#c0c0c0">标记</text>
<text x="1058" y="14" fill="#c0c0c0">+自选</text>
<text x="1096" y="14" fill="#c0c0c0">返回</text>
<text x="449.5" y="14" fill="#c0c0c0">&gt;</text>
<rect x="5.5" y="3.5" width="11" height="10" rx="2" fill="none" stroke="#8c8c8c" stroke-width="1.2"/><rect x="12" y="5" width="3" height="7" fill="#909090"/>
<rect x="1060.5" y="24.5" width="11" height="10" rx="2" fill="none" stroke="#8c8c8c" stroke-width="1.2"/><rect x="1067" y="26" width="3" height="7" fill="#909090"/>
<path d="M1042 29.5l5.5-5.5 5.5 5.5-5.5 5.5z" fill="none" stroke="#808080"/>
<text x="3" y="33" fill="#c0c0c0">澳柯玛(日线.前复权)</text>
<circle cx="122" cy="29" r="6" fill="#808080"/><path d="M118.5 27.5l3.5 3.5 3.5-3.5" fill="none" stroke="#282828" stroke-width="1.15"/>
<text x="132.5" y="33.3" fill="#ffff00" textLength="32" lengthAdjust="spacingAndGlyphs">MA10:</text>
<text x="170.5" y="33.3" fill="#00ff00" textLength="38.5" lengthAdjust="spacingAndGlyphs">MA20: -</text>
<path d="M131.5 41l12 3.5M131.5 41l4 -1.5M131.5 41l2 3.5" fill="none" stroke="#c0c0c0" shape-rendering="crispEdges"/>
<text x="146" y="50" fill="#c0c0c0">8.43</text>
<path d="M15 354.5h11M15 354.5l3-3M15 354.5l3 3" fill="none" stroke="#c0c0c0"/>
<text x="27" y="359" fill="#c0c0c0">6.01</text>
<text x="1120.5" y="100.8" fill="#ff3232" text-anchor="end">8.00</text>
<text x="1120.5" y="133.8" fill="#ff3232" text-anchor="end">7.75</text>
<text x="1120.5" y="165.8" fill="#ff3232" text-anchor="end">7.50</text>
<text x="1120.5" y="197.8" fill="#ff3232" text-anchor="end">7.25</text>
<text x="1120.5" y="229.8" fill="#ff3232" text-anchor="end">7.00</text>
<text x="1120.5" y="262.8" fill="#ff3232" text-anchor="end">6.75</text>
<text x="1120.5" y="294.8" fill="#ff3232" text-anchor="end">6.50</text>
<text x="1120.5" y="326.8" fill="#ff3232" text-anchor="end">6.25</text>
<text x="1120.5" y="359.8" fill="#ff3232" text-anchor="end">6.00</text>
<text x="1120.5" y="420.8" fill="#ff3232" text-anchor="end">150.0</text>
<text x="1120.5" y="466.8" fill="#ff3232" text-anchor="end">100.0</text>
<text x="1120.5" y="512.8" fill="#ff3232" text-anchor="end">50.00</text>
<text x="1120.5" y="557.8" fill="#ff3232" text-anchor="end">0.00</text>
<text x="1077" y="373.5" fill="#d8d8d8">5.82</text>
<text x="114" y="393" fill="#ffffff">张</text>
<text x="789" y="393" fill="#ffffff">财</text>
<circle cx="8" cy="405" r="6" fill="#808080"/><path d="M4.5 403.5l3.5 3.5 3.5-3.5" fill="none" stroke="#282828" stroke-width="1.15"/>
<text x="18" y="410" fill="#e0e0e0">股朋指标网</text>
<text x="82" y="410" fill="#808080">套牢线: 79.52</text>
<text x="160" y="410" fill="#0000ff">控盘线: 20.48</text>
<text x="238" y="410" fill="#00ff00">资金线: -5.00</text>
<text x="314" y="410" fill="#ffff00">风险线: 60.00</text>
<text x="392" y="410" fill="#ff00ff">乖离线: 20.00</text>
<text x="4.3" y="643" fill="#ff3232">2025</text>
<text x="31" y="643" fill="#ff3232">年</text>
<text x="219.5" y="643" fill="#ff3232">6</text>
<text x="416.5" y="643" fill="#ff3232">7</text>
<text x="640" y="643" fill="#ff3232">8</text>
<text x="846.5" y="643" fill="#ff3232">9</text>
<text x="1050" y="627" text-anchor="middle" class="s" fill="#ffffff" stroke="#ffffff" stroke-width="0.35" style="font-size:20.5px" transform="translate(0 627) scale(1.02 0.92) translate(-20.6 -627)">乐淘公式网</text>
<text x="1046" y="644.5" text-anchor="middle" class="s" fill="#ffffff" stroke="#ffffff" stroke-width="0.4" style="font-size:15px">www.60lt.com</text>
</svg></body></html>
